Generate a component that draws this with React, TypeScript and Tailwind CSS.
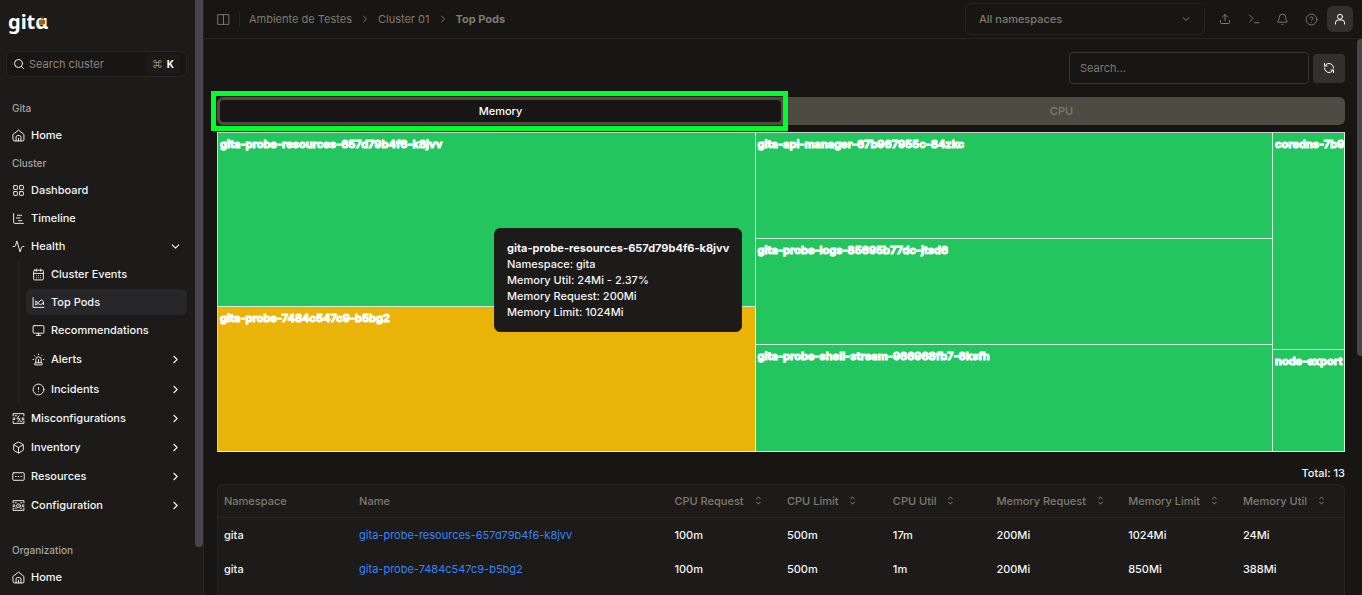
import type { ComponentType, ReactNode } from "react"
import {
  Activity,
  Bell,
  Box,
  CalendarDays,
  ChartGantt,
  ChevronDown,
  ChevronRight,
  CircleAlert,
  CircleQuestionMark,
  LayoutGrid,
  Monitor,
  RefreshCcw,
  Search,
  Siren,
  Upload,
} from "lucide-react"
import { RxCaretSort } from "react-icons/rx"

type IconProps = { size?: number; strokeWidth?: number; className?: string }
type IconType = ComponentType<IconProps>

function Svg({ size = 13, strokeWidth = 1.75, className, children }: IconProps & { children: ReactNode }) {
  return (
    <svg
      width={size}
      height={size}
      viewBox="0 0 24 24"
      fill="none"
      stroke="currentColor"
      strokeWidth={strokeWidth}
      strokeLinecap="round"
      strokeLinejoin="round"
      className={className}
      aria-hidden="true"
    >
      {children}
    </svg>
  )
}

const HomeIcon = (props: IconProps) => (
  <Svg {...props}>
    <path d="M2 10 12 2l10 8v10a2 2 0 0 1-2 2H4a2 2 0 0 1-2-2z" />
    <path d="M7.500 22v-7a3 3 0 0 1 3-3h3a3 3 0 0 1 3 3v7M12 17v5" />
  </Svg>
)

const AreaIcon = (props: IconProps) => (
  <Svg {...props}>
    <path d="M2 3v18h20" />
    <path d="M7 16V9l4.500 3.500L17 7l4 3v6" />
    <path d="m7 16 4-2 5 2 5-3" />
  </Svg>
)

const TicketBoltIcon = (props: IconProps) => (
  <Svg {...props}>
    <path d="M2 7V3h20v4M2 17v4h20v-4M2 11h3v3H2M22 11h-3v3h3M5.500 7h3M15.500 17h3" />
    <path d="m13 7-4 5.500h6L11 18" />
  </Svg>
)

const TicketGearIcon = (props: IconProps) => (
  <Svg {...props}>
    <path d="M2 7V3h20v4M2 17v4h20v-4M2 11h3v3H2M22 11h-3v3h3M6 7h2M16 7h2M6 17h2M16 17h2" />
    <circle cx="12" cy="12.500" r="3.500" />
    <path d="M12 12.500h.01" />
  </Svg>
)

const ResourcesIcon = (props: IconProps) => (
  <Svg {...props}>
    <rect x="1.500" y="5" width="21" height="14" rx="1.500" />
    <path d="M6.500 12h1M11.500 12h1M16.500 12h1" />
  </Svg>
)

const PanelIcon = (props: IconProps) => (
  <Svg {...props}>
    <path d="M2 3h20v18H2zM12 3v18" />
  </Svg>
)

const PromptIcon = (props: IconProps) => (
  <Svg {...props}>
    <path d="m3 4 7 7-7 7M13 19.500h9" />
  </Svg>
)

const PersonIcon = (props: IconProps) => (
  <Svg {...props}>
    <circle cx="12" cy="7.500" r="5" />
    <path d="M3 22v-2.500a5.500 5.500 0 0 1 5.500-5.500h7a5.500 5.500 0 0 1 5.500 5.500V22" />
  </Svg>
)

type NavEntry = { label: string; icon: IconType; expandable?: boolean }

const healthItems: NavEntry[] = [
  { label: "Cluster Events", icon: CalendarDays },
  { label: "Top Pods", icon: AreaIcon },
  { label: "Recommendations", icon: Monitor },
  { label: "Alerts", icon: Siren, expandable: true },
  { label: "Incidents", icon: CircleAlert, expandable: true },
]

const clusterItems: NavEntry[] = [
  { label: "Misconfigurations", icon: TicketBoltIcon },
  { label: "Inventory", icon: Box },
  { label: "Resources", icon: ResourcesIcon },
  { label: "Configuration", icon: TicketGearIcon },
]

const pods = [
  { name: "gita-probe-resources-657d79b4f6-k8jvv", cells: ["100m", "500m", "17m", "200Mi", "1024Mi", "24Mi"] },
  { name: "gita-probe-7484c547c9-b5bg2", cells: ["100m", "500m", "1m", "200Mi", "850Mi", "388Mi"] },
]

const sortableColumns = ["CPU Request", "CPU Limit", "CPU Util", "Memory Request", "Memory Limit", "Memory Util"]

const treemap = [
  {
    weight: 538,
    tiles: [
      { name: "gita-probe-resources-657d79b4f6-k8jvv", weight: 175, warn: false },
      { name: "gita-probe-7484c547c9-b5bg2", weight: 145, warn: true },
    ],
  },
  {
    weight: 518,
    tiles: [
      { name: "gita-api-manager-67b967955c-84zkc", weight: 106, warn: false },
      { name: "gita-probe-logs-85695b77dc-jtsd6", weight: 107, warn: false },
      { name: "gita-probe-shell-stream-966968fb7-6ksfh", weight: 107, warn: false },
    ],
  },
  {
    weight: 72,
    tiles: [
      { name: "coredns-7b9", weight: 218, warn: false },
      { name: "node-export", weight: 102, warn: false },
    ],
  },
]

function NavLink({ label, icon: Icon }: NavEntry) {
  return (
    <a href="#" className="flex h-7 items-center gap-1.5 px-1.5">
      <Icon size={13} strokeWidth={1.75} />
      {label}
    </a>
  )
}

function NavGroup({ label, icon: Icon }: NavEntry) {
  return (
    <button type="button" className="flex h-[29px] w-full items-center gap-1.5 pr-[5px] pl-1.5">
      <Icon size={13} strokeWidth={1.75} />
      {label}
      <ChevronRight size={13} className="ml-auto" />
    </button>
  )
}

function SectionTitle({ children }: { children: ReactNode }) {
  return <h2 className="flex h-[26px] items-center px-1.5 text-[10px] font-medium text-[#a8a5a0]">{children}</h2>
}

function Sidebar() {
  return (
    <aside className="flex w-[204px] shrink-0 border-r border-[#262522] bg-[#1c1b19]">
      <div className="min-w-0 flex-1 overflow-hidden pr-2 pl-1.5 text-[11px] font-medium text-[#f5f5f4]">
        {/* Logo */}
        <a href="#" aria-label="gita" className="relative flex h-[51px] w-12 items-center pb-2 pl-0.5">
          <span className="font-['Noto_Sans'] text-xl leading-6 font-bold text-white">gitɑ</span>
          <svg width="8" height="10" viewBox="0 0 16 20" className="absolute top-4 left-8" aria-hidden="true">
            <path d="M5 1 8 5l3-4" stroke="#57534e" strokeWidth="2" fill="none" />
            <ellipse cx="8" cy="12" rx="7" ry="6" fill="#d9a320" />
            <path d="M2 10h12M2 14h12" stroke="#3b3321" strokeWidth="2" />
          </svg>
        </a>

        {/* Search */}
        <button
          type="button"
          className="flex h-[26px] w-full items-center gap-1 rounded-md border border-[#262522] bg-[#171614] px-1.5 font-normal text-[#8a867c]"
        >
          <Search size={12} className="text-[#f5f5f4]" />
          Search cluster
          <span className="ml-auto flex h-5 items-center gap-1 rounded bg-[#1c1b19] px-1.5">
            <span>⌘</span>
            <kbd className="font-[Inter,sans-serif] text-[10px] font-bold text-white">K</kbd>
          </span>
        </button>

        <nav className="mt-[18px] flex flex-col gap-px">
          <section>
            <SectionTitle>Gita</SectionTitle>
            <NavLink label="Home" icon={HomeIcon} />
          </section>
          <section>
            <SectionTitle>Cluster</SectionTitle>
            <NavLink label="Dashboard" icon={LayoutGrid} />
            <NavLink label="Timeline" icon={ChartGantt} />
            <button type="button" className="flex h-7 w-full items-center gap-1.5 pr-[5px] pl-1.5">
              <Activity size={13} strokeWidth={1.75} />
              Health
              <ChevronDown size={13} className="ml-auto" />
            </button>
            <div className="ml-3 border-l border-[#262522] pl-[7px]">
              {healthItems.map((item) =>
                item.expandable ? (
                  <div key={item.label} className="flex h-[30px] items-center">
                    <NavGroup {...item} />
                  </div>
                ) : (
                  <div key={item.label} className="flex h-7 items-center">
                    <a
                      href="#"
                      className={
                        item.label === "Top Pods"
                          ? "flex h-[26px] flex-1 items-center gap-1.5 rounded-md bg-[#27272a] px-1.5"
                          : "flex h-[26px] flex-1 items-center gap-1.5 px-1.5"
                      }
                    >
                      <item.icon size={13} strokeWidth={1.75} />
                      {item.label}
                    </a>
                  </div>
                ),
              )}
            </div>
            {clusterItems.map((item) => (
              <NavGroup key={item.label} {...item} />
            ))}
          </section>
          <section className="mt-4">
            <SectionTitle>Organization</SectionTitle>
            <NavLink label="Home" icon={HomeIcon} />
          </section>
        </nav>
      </div>
      <div className="w-2 shrink-0">
        <div className="h-[92%] rounded-b-full bg-[#46464a]" />
      </div>
    </aside>
  )
}

function Header() {
  return (
    <header className="flex h-[39px] shrink-0 items-center border-b border-[#262522] pr-[9px] pl-[13px] text-[11px] text-[#7f7a6d]">
      <button type="button" aria-label="Toggle sidebar">
        <PanelIcon size={13} />
      </button>
      <div className="mx-[9px] h-4 w-px bg-[#262522]" />
      <nav aria-label="Breadcrumb" className="flex items-center gap-[7px]">
        <a href="#">Ambiente de Testes</a>
        <ChevronRight size={12} />
        <a href="#">Cluster 01</a>
        <ChevronRight size={12} />
        <span className="font-bold">Top Pods</span>
      </nav>

      <div className="relative ml-auto w-60">
        <select
          aria-label="Namespace"
          className="h-8 w-full appearance-none rounded-md border border-[#262522] bg-transparent px-[13px] font-medium"
        >
          <option>All namespaces</option>
        </select>
        <ChevronDown size={12} className="pointer-events-none absolute top-2.5 right-[13px]" />
      </div>
      <div className="ml-[5px] flex items-center">
        <button type="button" aria-label="Upload" className="flex w-[29px] justify-center">
          <Upload size={12} />
        </button>
        <button type="button" aria-label="Terminal" className="flex w-[29px] justify-center">
          <PromptIcon size={12} strokeWidth={2} />
        </button>
        <button type="button" aria-label="Notifications" className="flex w-[29px] justify-center">
          <Bell size={13} strokeWidth={1.75} />
        </button>
        <button type="button" aria-label="Help" className="flex w-[29px] justify-center">
          <CircleQuestionMark size={13} strokeWidth={1.75} />
        </button>
        <button
          type="button"
          aria-label="Account"
          className="ml-px flex h-[26px] w-[26px] items-center justify-center rounded-md bg-[#33312d] text-white"
        >
          <PersonIcon size={12} strokeWidth={2} />
        </button>
      </div>
    </header>
  )
}

function Treemap() {
  return (
    <div className="relative flex h-80 border-t border-l border-white/80">
      {treemap.map((column) => (
        <div key={column.weight} className="flex min-w-0 basis-0 flex-col" style={{ flexGrow: column.weight }}>
          {column.tiles.map((tile) => (
            <div
              key={tile.name}
              className={
                tile.warn
                  ? "min-h-0 basis-0 overflow-hidden border-r border-b border-white/80 bg-[#eab308]"
                  : "min-h-0 basis-0 overflow-hidden border-r border-b border-white/80 bg-[#22c55e]"
              }
              style={{ flexGrow: tile.weight }}
            >
              <span className="block px-0.5 pt-[3px] text-[11px] leading-4 font-bold whitespace-nowrap text-white [-webkit-text-stroke:1px_white]">
                {tile.name}
              </span>
            </div>
          ))}
        </div>
      ))}

      {/* Tooltip */}
      <div
        role="tooltip"
        className="absolute top-[95px] left-[276px] rounded-md border border-[#262522] bg-[#1c1b19] px-3 py-[11px] text-[11px] leading-4 font-medium whitespace-nowrap text-[#f5f5f4]"
      >
        <p className="font-bold">gita-probe-resources-657d79b4f6-k8jvv</p>
        <p>Namespace: gita</p>
        <p>Memory Util: 24Mi - 2.37%</p>
        <p>Memory Request: 200Mi</p>
        <p>Memory Limit: 1024Mi</p>
      </div>
    </div>
  )
}

function PodsTable() {
  return (
    <div className="mt-[3px] overflow-hidden rounded-t-md border border-b-0 border-[#262522] bg-[#1c1b19]">
      <table className="w-full table-fixed text-left text-[11px] font-medium text-[#f5f5f4]">
        <colgroup>
          <col className="w-[12%]" />
          <col className="w-[28%]" />
          <col className="w-[10%]" />
          <col className="w-[9.4%]" />
          <col className="w-[9.2%]" />
          <col className="w-[11.7%]" />
          <col className="w-[10.2%]" />
          <col />
        </colgroup>
        <thead className="text-[#7f7a6d]">
          <tr className="h-8 border-b border-[#262522]">
            <th className="px-1.5 font-medium">Namespace</th>
            <th className="px-1.5 font-medium">Name</th>
            {sortableColumns.map((column) => (
              <th key={column} className="px-1.5 font-medium whitespace-nowrap">
                <button type="button" className="flex items-center gap-2">
                  {column}
                  <RxCaretSort size={13} />
                </button>
              </th>
            ))}
          </tr>
        </thead>
        <tbody>
          {pods.map((pod) => (
            <tr key={pod.name} className="h-[35px]">
              <td className="px-1.5">gita</td>
              <td className="px-1.5 font-normal">
                <a href="#" className="text-[#3b82f6]">
                  {pod.name}
                </a>
              </td>
              {pod.cells.map((cell, i) => (
                <td key={sortableColumns[i]} className="px-1.5">
                  {cell}
                </td>
              ))}
            </tr>
          ))}
          <tr className="h-[35px]">
            <td colSpan={8} />
          </tr>
        </tbody>
      </table>
    </div>
  )
}

export default function App() {
  return (
    <div className="flex h-screen overflow-hidden bg-[#171614] font-[Inter,sans-serif]">
      <Sidebar />
      <div className="flex min-w-0 flex-1 flex-col">
        <Header />
        <div className="flex min-h-0 flex-1">
          <main className="min-w-0 flex-1 overflow-hidden pt-[13px] pr-3 pl-[13px]">
            {/* Toolbar */}
            <div className="flex items-center justify-end gap-1">
              <input
                type="search"
                aria-label="Search pods"
                placeholder="Search..."
                className="h-8 w-60 rounded border border-[#373530] bg-transparent px-2.5 text-[11px] text-white placeholder:text-[#7f7a6d]"
              />
              <button
                type="button"
                aria-label="Refresh"
                className="flex h-[29px] w-8 items-center justify-center rounded bg-[#33312d] text-white"
              >
                <RefreshCcw size={12} />
              </button>
            </div>

            {/* Metric tabs */}
            <div role="tablist" className="mt-[13px] flex h-7 rounded-md bg-[#4e4b43] p-[3px] text-[11px] font-medium">
              <button type="button" role="tab" aria-selected="true" className="relative flex-1 rounded bg-[#171614] text-white">
                Memory
                <span className="absolute -inset-y-[9px] -right-[7px] -left-[9px] border-[5px] border-[#00ff2a]" />
              </button>
              <button type="button" role="tab" aria-selected="false" className="flex-1 text-[#7f7a6d]">
                CPU
              </button>
            </div>

            <div className="mt-[7px]">
              <Treemap />
            </div>

            <p className="mt-[13px] text-right text-[11px] leading-4 font-medium text-[#f5f5f4]">Total: 13</p>
            <PodsTable />
          </main>
          <div className="w-[5px] shrink-0">
            <div className="h-[57%] rounded-l bg-[#46464a]" />
          </div>
        </div>
      </div>
    </div>
  )
}
